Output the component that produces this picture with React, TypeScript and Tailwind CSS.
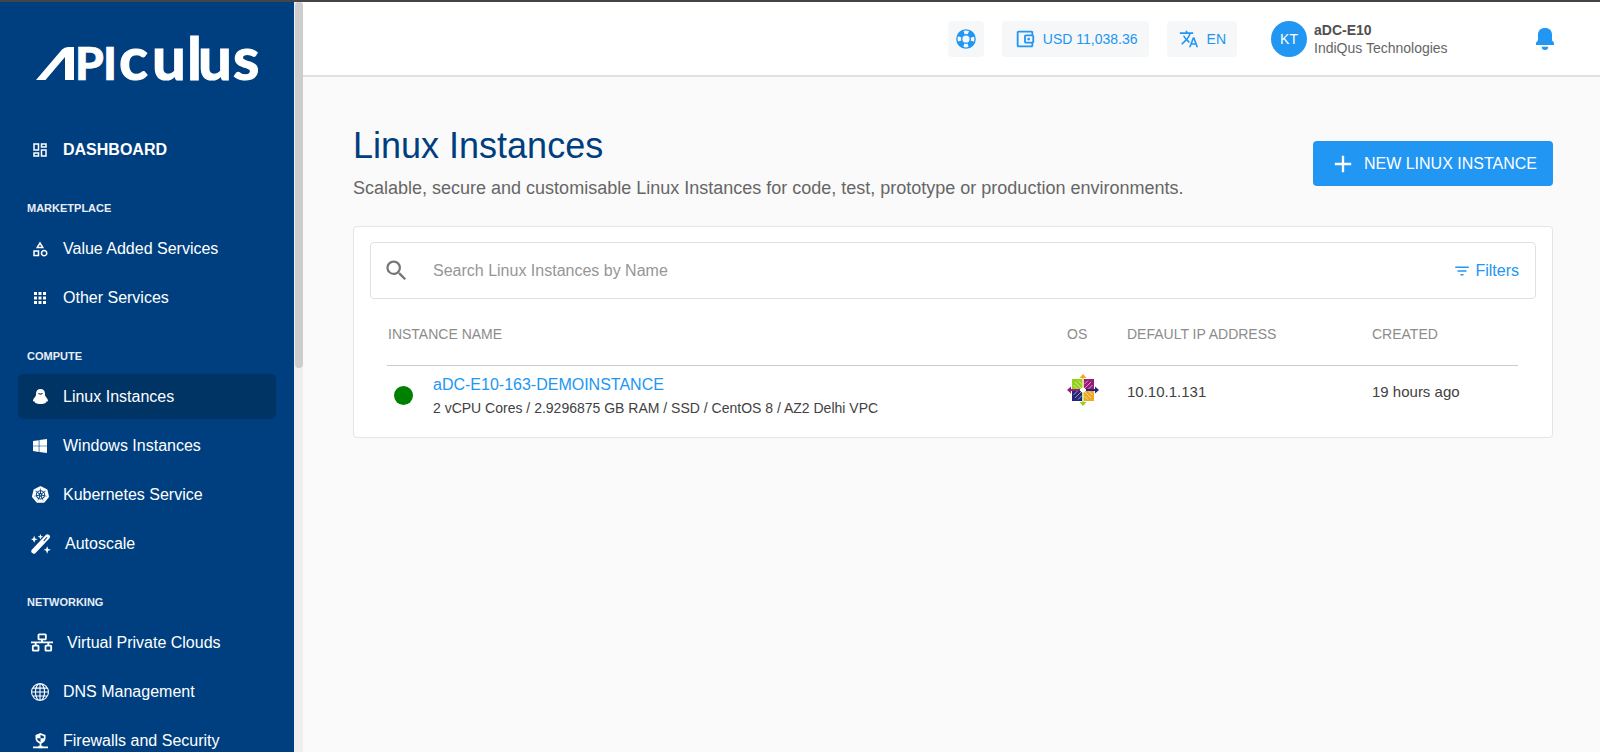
import type { ReactNode } from 'react';
import { BsGlobe, BsWindows } from 'react-icons/bs';
import {
  MdAdd,
  MdApps,
  MdFilterList,
  MdOutlineAccountBalanceWallet,
  MdOutlineCategory,
  MdOutlineDashboard,
  MdSearch,
  MdTranslate,
} from 'react-icons/md';
import { SiKubernetes } from 'react-icons/si';

type Item = { label: string; icon: ReactNode; active?: boolean; bold?: boolean };
type Group = { title?: string; items: Item[] };

function PenguinIcon() {
  return (
    <svg viewBox="0 0 45 45" className="size-[15px]" fill="currentColor" aria-hidden="true">
      <path
        fillRule="evenodd"
        d="M22.500 0C31 0 36 6 36 14c0 3 0 5 1.500 7.500C41 26 45 31 45 35.500c0 2-2 2.500-4 1.500-1 3.500-3 5-5 6-3 1.500-7 2-13.500 2S12 44.500 9 43c-2-1-4-2.500-5-6-2 1-4 .5-4-1.500 0-4.500 4-9.500 7.500-14C9 19 9 17 9 14 9 6 14 0 22.500 0zM14.500 12c2 3.500 5 5 8 5s6-1.500 8-5c-2.500 1-5 1.500-8 1.500s-5.500-.5-8-1.500z"
      />
    </svg>
  );
}

function WandIcon() {
  return (
    <svg viewBox="0 0 57 57" className="size-[22px] p-px" fill="currentColor" aria-hidden="true">
      <path d="M9 5l3 7.500L19 15l-7 3-3 7-3-7-6-3 6-2.500zM27 0l2.200 5.500L35 8l-5.800 2.200L27 16l-2.200-5.800L19 8l5.800-2.500zM46 35l3 7.500 8 2.500-8 3-3 8-3-8-7-3 7-2.500z" />
      <path d="M8 49 47 8" stroke="currentColor" strokeWidth="14" strokeLinecap="round" />
      <path d="M37 19l8-9" stroke="#003f7f" strokeWidth="3" strokeLinecap="round" />
    </svg>
  );
}

function NetworkIcon() {
  return (
    <svg viewBox="-3 0 72 60" className="h-[20px] w-[24px]" fill="none" stroke="currentColor" strokeWidth="5.500" aria-hidden="true">
      <rect x="22.500" y="4" width="22" height="15" rx="2" />
      <path d="M33 19v9M0 28h66M14 28v8M52 28v8" />
      <rect x="5.500" y="38" width="17" height="15" rx="2" />
      <rect x="43.500" y="38" width="17" height="15" rx="2" />
    </svg>
  );
}

function FirewallIcon() {
  return (
    <svg viewBox="0 0 45 48" className="h-4 w-[15px]" fill="none" stroke="currentColor" strokeWidth="5" aria-hidden="true">
      <path d="M22.500 3 35 8v8c0 6-5 11-12.500 14C15 27 10 22 10 16V8z" />
      <path d="M22.500 4v12H11V8zM22.500 16H34c-1 6-5 10-11.500 13z" fill="currentColor" stroke="none" />
      <path d="M22.500 29v12M0 43h45" />
      <path d="M16 42h13" strokeWidth="7" />
    </svg>
  );
}

function LifebuoyIcon() {
  return (
    <svg viewBox="0 0 58 58" className="size-5" fill="none" stroke="currentColor" aria-hidden="true">
      <circle cx="29" cy="29" r="26.500" strokeWidth="4" />
      <circle cx="29" cy="29" r="12.500" strokeWidth="4" />
      <circle cx="29" cy="29" r="20" strokeWidth="13" strokeDasharray="18.400 13.016" strokeDashoffset="-6.500" />
    </svg>
  );
}

function BellIcon() {
  return (
    <svg viewBox="0 0 54 66" className="h-[22px] w-[18px]" fill="currentColor" aria-hidden="true">
      <path d="M27 0c13 0 21 8 21 20v17l6 7v7H0v-7l6-7V20C6 8 14 0 27 0zM17 56h20c0 6-4 10-10 10s-10-4-10-10z" />
    </svg>
  );
}

function CentOsIcon() {
  return (
    <svg viewBox="0 0 32 32" className="size-8" role="img" aria-label="CentOS">
      <path d="M5 5h10v10H5z" fill="#93cf1b" />
      <path d="M17 5h10v10H17z" fill="#951c7a" />
      <path d="M5 17h10v10H5z" fill="#262577" />
      <path d="M17 17h10v10H17z" fill="#efa724" />
      <path
        d="M8 8l16 16M24 8 8 24M11 6.500l4 4M6.500 11l4 4M21 6.500l-4 4M25.500 11l-4 4M6.500 21l4-4M11 25.500l4-4M25.500 21l-4-4M21 25.500l-4-4"
        stroke="#fff"
        strokeOpacity="0.7"
        strokeWidth="0.800"
      />
      <path d="M15 4h2v11h-2z" fill="#f7d391" />
      <path d="M15 17h2v11h-2z" fill="#c9e78d" />
      <path d="M16 0l3.500 4h-7z" fill="#efa724" />
      <path d="M16 32l3.500-4h-7z" fill="#93cf1b" />
      <path d="M0 16l4-3.500V15h9v2H4v2.500z" fill="#951c7a" />
      <path d="M32 16l-4-3.500V15h-9v2h9v2.500z" fill="#262577" />
      <circle cx="16" cy="16" r="2.500" fill="#fff" />
    </svg>
  );
}

function Logo() {
  return (
    <svg viewBox="0 -20 236 84" className="h-[84px] w-[236px]" fill="#fff" role="img" aria-label="Apiculus">
      <path d="M0 45 26 14.500Q28.500 12 32 12h6v33h-9V22L9.500 45z" />
      <text x="39 67" y="45" fontSize="46" fontWeight="900" fontFamily="Lato, sans-serif" stroke="#fff" strokeWidth="0.600">PI</text>
      <text x="83 116 151 162 197" y="45" fontSize="60" fontWeight="700" fontFamily="Lato, sans-serif" stroke="#fff" strokeWidth="1.200">culus</text>
    </svg>
  );
}

const groups: Group[] = [
  { items: [{ label: 'DASHBOARD', icon: <MdOutlineDashboard size={18} />, bold: true }] },
  {
    title: 'MARKETPLACE',
    items: [
      { label: 'Value Added Services', icon: <MdOutlineCategory size={18} /> },
      { label: 'Other Services', icon: <MdApps size={18} /> },
    ],
  },
  {
    title: 'COMPUTE',
    items: [
      { label: 'Linux Instances', icon: <PenguinIcon />, active: true },
      { label: 'Windows Instances', icon: <BsWindows size={14} /> },
      { label: 'Kubernetes Service', icon: <SiKubernetes size={17} /> },
      { label: 'Autoscale', icon: <WandIcon /> },
    ],
  },
  {
    title: 'NETWORKING',
    items: [
      { label: 'Virtual Private Clouds', icon: <NetworkIcon /> },
      { label: 'DNS Management', icon: <BsGlobe size={18} /> },
      { label: 'Firewalls and Security', icon: <FirewallIcon /> },
    ],
  },
];

function Sidebar() {
  return (
    <aside className="flex w-[303px] shrink-0 overflow-hidden bg-[#efefef]">
      <div className="flex w-[294px] flex-col bg-[#003f7f] px-[18px] text-white">
        <a href="#home" className="ml-[18px] mt-[13px] block">
          <Logo />
        </a>
        <nav className="mt-7 flex flex-col gap-[26px]">
          {groups.map((group, i) => (
            <section key={i}>
              {group.title && (
                <h2 className="mb-2 flex h-5 items-center pl-[9px] text-[11px] font-bold text-[#e8eef5]">{group.title}</h2>
              )}
              <ul className="flex flex-col gap-1">
                {group.items.map((item) => (
                  <li key={item.label}>
                    <a
                      href="#section"
                      className={`flex h-[45px] items-center gap-[13px] rounded-[5px] pl-3 text-base ${item.active ? 'bg-[#003465]' : ''} ${item.bold ? 'font-bold' : ''}`}
                    >
                      <span className="flex min-w-5 justify-center">{item.icon}</span>
                      {item.label}
                    </a>
                  </li>
                ))}
              </ul>
            </section>
          ))}
        </nav>
      </div>
      <div className="ml-px h-[366px] w-2 rounded-full bg-[#cdcdcd]" />
    </aside>
  );
}

function Header() {
  return (
    <header className="flex h-[75px] shrink-0 items-center justify-end border-b-2 border-[#e0e0e0] bg-white pr-[46px] text-sm text-[#2196f3]">
      <button type="button" aria-label="Support" className="flex size-9 items-center justify-center rounded bg-[#f5f7f9]">
        <LifebuoyIcon />
      </button>
      <button type="button" className="ml-[18px] flex h-9 items-center gap-[7px] rounded bg-[#f5f7f9] pl-3 pr-[11px]">
        <MdOutlineAccountBalanceWallet size={22} />
        USD 11,038.36
      </button>
      <button type="button" className="ml-[18px] flex h-9 items-center gap-2 rounded bg-[#f5f7f9] pl-3 pr-[11px]">
        <MdTranslate size={20} />
        EN
      </button>
      <div className="ml-[34px] flex w-[265px] items-center gap-[7px]">
        <span className="flex size-9 items-center justify-center rounded-full bg-[#2196f3] text-white">KT</span>
        <p className="text-sm leading-[18px] text-[#666]">
          <strong className="block text-[#505050]">aDC-E10</strong>
          IndiQus Technologies
        </p>
      </div>
      <button type="button" aria-label="Notifications">
        <BellIcon />
      </button>
    </header>
  );
}

function InstanceTable() {
  return (
    <table className="w-full table-fixed text-left text-sm">
      <colgroup>
        <col />
        <col className="w-[60px]" />
        <col className="w-[245px]" />
        <col className="w-[146px]" />
      </colgroup>
      <thead>
        <tr className="h-[62px] border-b border-[#cbcbcb] text-[#8c8c8c]">
          <th className="pl-px font-normal">INSTANCE NAME</th>
          <th className="font-normal">OS</th>
          <th className="font-normal">DEFAULT IP ADDRESS</th>
          <th className="font-normal">CREATED</th>
        </tr>
      </thead>
      <tbody>
        <tr className="h-[53px] text-[15px] text-[#424242]">
          <td>
            <div className="flex items-center gap-5 pl-[7px] pt-[7px]">
              <span className="size-[19px] rounded-full bg-[#008000]" />
              <div>
                <a href="#instance" className="block text-base leading-6 text-[#2196f3]">
                  aDC-E10-163-DEMOINSTANCE
                </a>
                <p className="text-sm leading-[22px]">2 vCPU Cores / 2.9296875 GB RAM / SSD / CentOS 8 / AZ2 Delhi VPC</p>
              </div>
            </div>
          </td>
          <td className="pb-1">
            <CentOsIcon />
          </td>
          <td>10.10.1.131</td>
          <td>19 hours ago</td>
        </tr>
      </tbody>
    </table>
  );
}

export default function App() {
  return (
    <div className="flex h-screen flex-col overflow-hidden border-t-2 border-[#44434a] bg-[#fafafa] font-['Liberation_Sans',Arial,sans-serif]">
      <div className="flex min-h-0 flex-1">
        <Sidebar />
        <div className="flex min-w-0 flex-1 flex-col">
          <Header />
          <main className="pl-[50px] pr-[47px] pt-[47px]">
            <div className="flex items-start justify-between">
              <div>
                <h1 className="text-4xl leading-[44px] text-[#003f7f]">Linux Instances</h1>
                <p className="mt-2 text-lg leading-6 text-[#666]">
                  Scalable, secure and customisable Linux Instances for code, test, prototype or production environments.
                </p>
              </div>
              <button type="button" className="mt-[17px] flex h-[45px] items-center gap-[7px] rounded bg-[#2196f3] px-4 text-base text-white">
                <MdAdd size={28} />
                NEW LINUX INSTANCE
              </button>
            </div>
            <section className="mt-[26px] rounded border border-[#e3e5e7] bg-white px-4 pb-[18px] pt-[15px]">
              <div className="flex h-[57px] items-center rounded border border-[#dee2e6] pl-3 pr-4">
                <label htmlFor="search" aria-label="Search" className="flex w-[50px] text-[#757575]">
                  <MdSearch size={27} />
                </label>
                <input
                  id="search"
                  type="text"
                  placeholder="Search Linux Instances by Name"
                  className="min-w-0 flex-1 bg-transparent text-base outline-none placeholder:text-[#969696]"
                />
                <button type="button" className="flex items-center gap-1 text-base text-[#2196f3]">
                  <MdFilterList size={18} />
                  Filters
                </button>
              </div>
              <div className="pl-[17px] pr-[18px] pt-1">
                <InstanceTable />
              </div>
            </section>
          </main>
        </div>
      </div>
    </div>
  );
}
